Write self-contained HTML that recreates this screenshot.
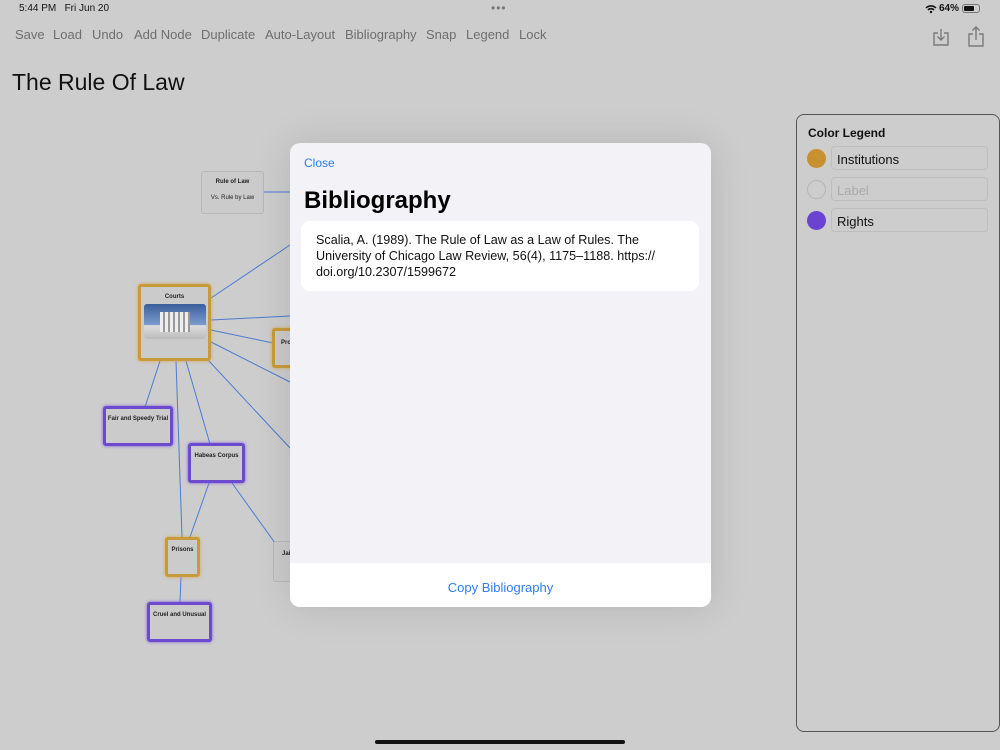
<!DOCTYPE html>
<html><head><meta charset="utf-8"><style>
*{margin:0;padding:0;box-sizing:border-box}
body{width:1000px;height:750px;overflow:hidden;background:#cdcdcd;font-family:"Liberation Sans",sans-serif;position:relative}
.abs{position:absolute}
.tb{position:absolute;top:27px;font-size:13px;color:#6e6e70}
.node{position:absolute;background:#cbcbcb;border-radius:3px;font-size:6px;font-weight:bold;text-align:center;color:#222;padding-top:7px}
.inst{border:3px solid #c99a3c;box-shadow:0 0 3px #d6a84a}
.rt{border:3px solid #6c4ad0;box-shadow:0 0 3px #7b5ae0}
.gr{border:1px solid #b8b8b8}
.row{position:absolute;left:807px;width:182px;height:24px}
.dot{position:absolute;left:0;top:3px;width:19px;height:19px;border-radius:50%}
.fld{position:absolute;left:24px;top:0;width:157px;height:24px;border:1px solid #bdbdbd;border-radius:4px;font-size:13px;padding:5px 5px;color:#111}
</style></head><body>
<div class="abs" style="left:19px;top:3px;font-size:10px;color:#111">5:44 PM&nbsp;&nbsp; Fri Jun 20</div>
<div class="abs" style="left:491px;top:1px;font-size:12px;color:#777;letter-spacing:1px">•••</div>
<svg class="abs" style="left:925px;top:4px" width="12" height="10" viewBox="0 0 12 10"><path d="M1 4a7 7 0 0 1 10 0M3 6a4 4 0 0 1 6 0" stroke="#111" stroke-width="1.6" fill="none"/><circle cx="6" cy="8" r="1.2" fill="#111"/></svg>
<div class="abs" style="left:939px;top:3px;font-size:10px;font-weight:bold;color:#111">64%</div>
<div class="abs" style="left:962px;top:4px;width:18px;height:9px;border:1px solid #777;border-radius:3px"><div style="width:10px;height:5px;margin:1px;background:#111;border-radius:1px"></div></div>
<span class="tb" style="left:15px">Save</span><span class="tb" style="left:53px">Load</span><span class="tb" style="left:92px">Undo</span><span class="tb" style="left:134px">Add Node</span><span class="tb" style="left:201px">Duplicate</span><span class="tb" style="left:265px">Auto-Layout</span><span class="tb" style="left:345px">Bibliography</span><span class="tb" style="left:426px">Snap</span><span class="tb" style="left:466px">Legend</span><span class="tb" style="left:519px">Lock</span>
<svg class="abs" style="left:932px;top:27px" width="18" height="20" viewBox="0 0 18 20"><path d="M6 6H2v12h14V6h-4M9 2v11M5.5 9.5 9 13l3.5-3.5" stroke="#7a7a7a" stroke-width="1.4" fill="none"/></svg>
<svg class="abs" style="left:967px;top:25px" width="18" height="22" viewBox="0 0 18 22"><path d="M6 9H2v12h14V9h-4M9 15V2M5.5 5.5 9 2l3.5 3.5" stroke="#7a7a7a" stroke-width="1.4" fill="none"/></svg>
<div class="abs" style="left:12px;top:69px;font-size:23px;color:#111">The Rule Of Law</div>
<svg class="abs" style="left:0;top:0" width="300" height="750"><g stroke="#4d7bd0" stroke-width="1" fill="none">
<path d="M264 192H290M211 298L290 245M211 320L290 316M211 330L273 343M211 342L290 382M208 360L290 448M160 361L145 407M176 361L182 537M186 361L210 444M209 483L190 537M232 483L275 543M181 577L180 602"/></g></svg>
<div class="node gr" style="left:201px;top:171px;width:63px;height:43px">Rule of Law<div style="font-weight:normal;margin-top:10px">Vs. Rule by Law</div></div>
<div class="node inst" style="left:138px;top:284px;width:73px;height:77px">Courts<div style="margin:4px auto 0;width:62px;height:35px;border-radius:3px;background:linear-gradient(#3b5f9c,#7c9ccd 60%,#ddd 61%,#bbb)"><div style="width:30px;height:20px;margin:0 auto;position:relative;top:8px;background:repeating-linear-gradient(90deg,#eee 0 3px,#999 3px 5px)"></div></div></div>
<div class="node inst" style="left:272px;top:328px;width:30px;height:40px;text-align:left;padding-left:6px;padding-top:9px">Pro</div>
<div class="node rt" style="left:103px;top:406px;width:70px;height:40px">Fair and Speedy Trial</div>
<div class="node rt" style="left:188px;top:443px;width:57px;height:40px">Habeas Corpus</div>
<div class="node inst" style="left:165px;top:537px;width:35px;height:40px">Prisons</div>
<div class="node gr" style="left:273px;top:541px;width:30px;height:41px;text-align:left;padding-left:8px;padding-top:9px">Jai</div>
<div class="node rt" style="left:147px;top:602px;width:65px;height:40px">Cruel and Unusual</div>
<div class="abs" style="left:796px;top:114px;width:204px;height:618px;border:1px solid #555;border-radius:8px;background:#cdcdcd"></div>
<div class="abs" style="left:808px;top:126px;font-size:12px;font-weight:bold;color:#111">Color Legend</div>
<div class="row" style="top:146px"><div class="dot" style="background:#c8912f"></div><div class="fld">Institutions</div></div>
<div class="row" style="top:177px"><div class="dot" style="border:1px solid #b5b5b5"></div><div class="fld" style="color:#aaa">Label</div></div>
<div class="row" style="top:208px"><div class="dot" style="background:#6a43d2"></div><div class="fld">Rights</div></div>
<div class="abs" style="left:290px;top:143px;width:421px;height:464px;background:#f2f2f7;border-radius:10px;overflow:hidden;box-shadow:0 0 40px rgba(0,0,0,.12)">
<div class="abs" style="left:14px;top:13px;font-size:12px;color:#2f7cf6">Close</div>
<div class="abs" style="left:14px;top:44px;font-size:24px;font-weight:bold;color:#000">Bibliography</div>
<div class="abs" style="left:11px;top:78px;width:398px;height:70px;background:#fff;border-radius:8px;padding:11px 15px 0 15px;font-size:12.6px;line-height:16px;color:#111"><div style="width:345px">Scalia, A. (1989). The Rule of Law as a Law of Rules. The University of Chicago Law Review, 56(4), 1175–1188. https://<br>doi.org/10.2307/1599672</div></div>
<div class="abs" style="left:0;top:420px;width:421px;height:44px;background:#fff;text-align:center;font-size:13px;color:#2f7cf6;padding-top:17px">Copy Bibliography</div>
</div>
<div class="abs" style="left:375px;top:740px;width:250px;height:4px;border-radius:2px;background:#111"></div>
</body></html>
